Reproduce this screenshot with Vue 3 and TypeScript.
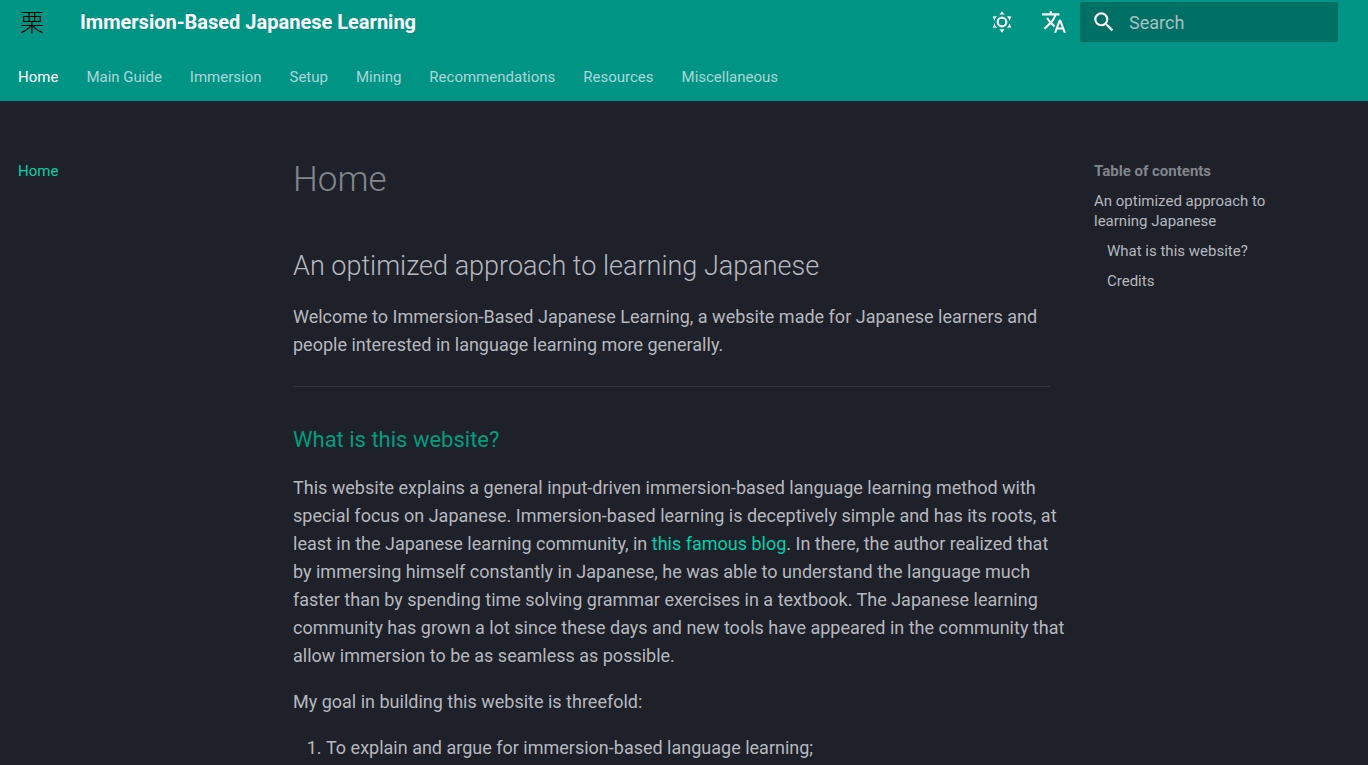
<script setup lang="ts">
import { ref } from 'vue'

const tabs: string[] = ['Home', 'Main Guide', 'Immersion', 'Setup', 'Mining', 'Recommendations', 'Resources', 'Miscellaneous']
const active = ref('Home')
const query = ref('')
</script>

<template>
  <div class="page">
    <header class="header">
      <div class="bar">
        <a class="logo" href="#" aria-label="Immersion-Based Japanese Learning"><span lang="ja">栗</span></a>
        <a class="title" href="#">Immersion-Based Japanese Learning</a>
        <button class="icon-button" type="button" aria-label="Switch to light mode">
          <svg viewBox="0 0 24 24"><path d="M12 7a5 5 0 0 1 5 5 5 5 0 0 1-5 5 5 5 0 0 1-5-5 5 5 0 0 1 5-5m0 2a3 3 0 0 0-3 3 3 3 0 0 0 3 3 3 3 0 0 0 3-3 3 3 0 0 0-3-3m0-7 2.39 3.42C13.65 5.15 12.84 5 12 5s-1.65.15-2.39.42zM3.34 7l4.16-.35A7.2 7.2 0 0 0 5.94 8.5c-.44.74-.69 1.5-.83 2.29zm.02 10 1.76-3.77a7.131 7.131 0 0 0 2.38 4.14zM20.65 7l-1.77 3.79a7.02 7.02 0 0 0-2.38-4.15zm-.01 10-4.14.36c.59-.51 1.12-1.14 1.54-1.86.42-.73.69-1.5.83-2.29zM12 22l-2.41-3.44c.74.27 1.55.44 2.41.44.82 0 1.63-.17 2.37-.44z" /></svg>
        </button>
        <button class="icon-button" type="button" aria-label="Select language">
          <svg viewBox="0 0 24 24"><path d="m12.87 15.07-2.54-2.51.03-.03A17.5 17.5 0 0 0 14.07 6H17V4h-7V2H8v2H1v2h11.17C11.5 7.92 10.44 9.75 9 11.35 8.07 10.32 7.3 9.19 6.69 8h-2c.73 1.63 1.73 3.17 2.98 4.56l-5.09 5.02L4 19l5-5 3.11 3.11zM18.5 10h-2L12 22h2l1.12-3h4.75L21 22h2zm-2.62 7 1.62-4.33L19.12 17z" /></svg>
        </button>
        <label class="search">
          <svg viewBox="0 0 24 24"><path d="M9.5 3A6.5 6.5 0 0 1 16 9.5c0 1.61-.59 3.09-1.56 4.23l.27.27h.79l5 5-1.5 1.5-5-5v-.79l-.27-.27A6.52 6.52 0 0 1 9.5 16 6.5 6.5 0 0 1 3 9.5 6.5 6.5 0 0 1 9.5 3m0 2C7 5 5 7 5 9.5S7 14 9.5 14 14 12 14 9.5 12 5 9.5 5" /></svg>
          <input v-model="query" type="text" aria-label="Search" placeholder="Search" />
        </label>
      </div>
      <nav class="tabs" aria-label="Tabs">
        <a v-for="tab in tabs" :key="tab" href="#" :class="{ active: tab === active }" @click.prevent="active = tab">{{ tab }}</a>
      </nav>
    </header>

    <div class="main">
      <nav class="side" aria-label="Navigation"><a class="current" href="#">Home</a></nav>

      <main class="content">
        <h1>Home</h1>
        <h2 id="approach">An optimized approach to learning Japanese</h2>
        <p>Welcome to Immersion-Based Japanese Learning, a website made for Japanese learners and people interested in language learning more generally.</p>
        <hr />
        <h3 id="what">What is this website?</h3>
        <p>
          This website explains a general input-driven immersion-based language learning method with
          special focus on Japanese. Immersion-based learning is deceptively simple and has its roots, at
          least in the Japanese learning community, in <a href="#">this famous blog</a>. In there, the author realized that
          by immersing himself constantly in Japanese, he was able to understand the language much
          faster than by spending time solving grammar exercises in a textbook. The Japanese learning
          community has grown a lot since these days and new tools have appeared in the community that
          allow immersion to be as seamless as possible.
        </p>
        <p>My goal in building this website is threefold:</p>
        <ol>
          <li>To explain and argue for immersion-based language learning;</li>
        </ol>
      </main>

      <nav class="side toc" aria-label="Table of contents">
        <strong>Table of contents</strong>
        <a href="#approach">An optimized approach to learning Japanese</a>
        <a class="nested" href="#what">What is this website?</a>
        <a class="nested" href="#credits">Credits</a>
      </nav>
    </div>
  </div>
</template>

<style>
body {
  margin: 0;
  background: #1e2129;
}
</style>

<style scoped>
.page {
  height: 100vh;
  overflow: hidden;
  color: #b6b8bf;
  background: #1e2129;
  font-family: Roboto, "Noto Sans CJK JP", sans-serif;
  font-size: 18px;
  line-height: 28px;
}
a {
  color: inherit;
  text-decoration: none;
}
svg {
  display: block;
  width: 26px;
  height: 26px;
  fill: #fff;
}
.header {
  background: #009485;
  color: #fff;
}
.bar {
  display: flex;
  align-items: center;
  height: 44px;
  padding: 0 30px 0 20px;
}
.logo {
  width: 60px;
  color: #000;
  font-family: "Noto Sans CJK JP", sans-serif;
  font-size: 24px;
  font-weight: 300;
  line-height: 24px;
  padding-bottom: 2px;
}
.title {
  flex: 1;
  font-size: 20px;
  font-weight: 700;
  line-height: 30px;
}
.icon-button {
  display: grid;
  place-items: center;
  width: 52px;
  height: 40px;
  padding: 0;
  border: 0;
  background: none;
}
.search {
  display: flex;
  align-items: center;
  gap: 12px;
  width: 258px;
  height: 40px;
  padding: 0 11px;
  box-sizing: border-box;
  border-radius: 2px;
  background: #007064;
}
.search input {
  flex: 1;
  min-width: 0;
  padding: 2px 0 0;
  border: 0;
  outline: 0;
  background: none;
  color: #fff;
  font: inherit;
}
.search input::placeholder {
  color: #a9bfc3;
  opacity: 1;
}
.tabs {
  display: flex;
  align-items: center;
  gap: 28px;
  height: 57px;
  padding: 8px 18px 0;
  box-sizing: border-box;
  font-size: 15px;
  line-height: 20px;
}
.tabs a {
  color: #acd6da;
}
.tabs .active {
  color: #fff;
}
.main {
  display: grid;
  grid-template-columns: 275px minmax(0, 1fr) 256px;
  padding: 60px 18px 0;
}
.side {
  display: flex;
  flex-direction: column;
  gap: 10px;
  font-size: 15px;
  line-height: 20px;
}
.content {
  padding-right: 26px;
}
.current,
.content p a {
  color: #00d0ab;
}
.toc {
  padding-right: 66px;
}
.toc strong {
  color: #82858c;
}
.nested {
  padding-left: 13px;
}
h1,
h2,
h3 {
  margin: 0;
  font-weight: 300;
}
h1 {
  color: #83868d;
  font-size: 35px;
  line-height: 46px;
  margin: -4px 0 43px;
}
h2 {
  font-size: 27px;
  line-height: 40px;
  margin-bottom: 17px;
}
h3 {
  color: #009e7c;
  font-size: 22px;
  font-weight: 400;
  line-height: 32px;
  margin-bottom: 18px;
}
p {
  margin: 0 0 18px;
}
hr {
  height: 1px;
  margin: 27px 18px 37px 0;
  border: 0;
  background: #32353d;
}
ol {
  margin: 0;
  padding-left: 33px;
}
</style>
